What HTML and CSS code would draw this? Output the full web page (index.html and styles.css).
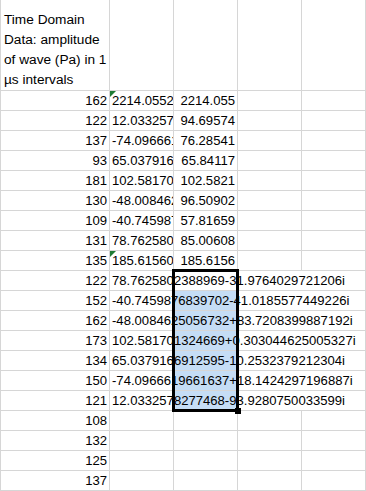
FILE: index.html
```html
<!DOCTYPE html>
<html>
<head>
<meta charset="utf-8">
<link rel="stylesheet" href="styles.css">
</head>
<body>
<div class="sheet">
  <div class="cell a head"><span>Time Domain<br>Data: amplitude<br>of wave (Pa) in 1<br>µs intervals</span></div>
  <div class="cell b"></div><div class="cell c"></div><div class="cell d"></div><div class="cell e"></div>

  <div class="cell a">162</div><div class="cell b flag">2214.05520000001</div><div class="cell c">2214.055</div><div class="cell d"></div><div class="cell e"></div>
  <div class="cell a">122</div><div class="cell b">12.0332578277468</div><div class="cell c">94.69574</div><div class="cell d"></div><div class="cell e"></div>
  <div class="cell a">137</div><div class="cell b">-74.0966619661637</div><div class="cell c">76.28541</div><div class="cell d"></div><div class="cell e"></div>
  <div class="cell a">93</div><div class="cell b">65.0379166912595</div><div class="cell c">65.84117</div><div class="cell d"></div><div class="cell e"></div>
  <div class="cell a">181</div><div class="cell b">102.581701324669</div><div class="cell c">102.5821</div><div class="cell d"></div><div class="cell e"></div>
  <div class="cell a">130</div><div class="cell b">-48.0084625056732</div><div class="cell c">96.50902</div><div class="cell d"></div><div class="cell e"></div>
  <div class="cell a">109</div><div class="cell b">-40.7459876839702</div><div class="cell c">57.81659</div><div class="cell d"></div><div class="cell e"></div>
  <div class="cell a">131</div><div class="cell b">78.7625802388969</div><div class="cell c">85.00608</div><div class="cell d"></div><div class="cell e"></div>
  <div class="cell a">135</div><div class="cell b flag">185.615600000001</div><div class="cell c">185.6156</div><div class="cell d"></div><div class="cell e"></div>

  <div class="cell a">122</div><div class="cell b spill">78.7625802388969-31.9764029721206i</div><div class="cell c active"><div class="selection"><div class="handle"></div></div></div><div class="cell d open"></div><div class="cell e"></div>
  <div class="cell a">152</div><div class="cell b spill">-40.7459876839702-41.0185577449226i</div><div class="cell c sel"></div><div class="cell d open"></div><div class="cell e"></div>
  <div class="cell a">162</div><div class="cell b spill">-48.0084625056732+83.7208399887192i</div><div class="cell c sel"></div><div class="cell d open"></div><div class="cell e"></div>
  <div class="cell a">173</div><div class="cell b spill">102.581701324669+0.303044625005327i</div><div class="cell c sel"></div><div class="cell d open"></div><div class="cell e"></div>
  <div class="cell a">134</div><div class="cell b spill">65.0379166912595-10.2532379212304i</div><div class="cell c sel"></div><div class="cell d open"></div><div class="cell e"></div>
  <div class="cell a">150</div><div class="cell b spill">-74.0966619661637+18.1424297196887i</div><div class="cell c sel"></div><div class="cell d open"></div><div class="cell e"></div>
  <div class="cell a">121</div><div class="cell b spill">12.0332578277468-93.9280750033599i</div><div class="cell c sel"></div><div class="cell d open"></div><div class="cell e"></div>

  <div class="cell a">108</div><div class="cell b"></div><div class="cell c"></div><div class="cell d"></div><div class="cell e"></div>
  <div class="cell a">132</div><div class="cell b"></div><div class="cell c"></div><div class="cell d"></div><div class="cell e"></div>
  <div class="cell a">125</div><div class="cell b"></div><div class="cell c"></div><div class="cell d"></div><div class="cell e"></div>
  <div class="cell a">137</div><div class="cell b"></div><div class="cell c"></div><div class="cell d"></div><div class="cell e"></div>
</div>
</body>
</html>
```

FILE: styles.css
```css
html, body {
  margin: 0;
  padding: 0;
  background: #ffffff;
}

body {
  font-family: "Liberation Sans", Arial, sans-serif;
  font-size: 13.1px;
  color: #000000;
}

.sheet {
  display: grid;
  grid-template-columns: 110px 64px 64px 64px 64px;
  grid-template-rows: 91px repeat(20, 20px);
  width: 366px;
}

.cell {
  box-sizing: border-box;
  border-right: 1px solid #d6d6d6;
  border-bottom: 1px solid #d6d6d6;
  line-height: 19px;
  white-space: nowrap;
  overflow: hidden;
  min-width: 0;
}

.a {
  border-left: 1px solid #d6d6d6;
  text-align: right;
  padding-right: 2px;
}

.head {
  display: flex;
  align-items: flex-end;
  text-align: left;
  padding-left: 3px;
  font-size: 13.66px;
  line-height: 20px;
}

.b {
  position: relative;
  padding-left: 2px;
}

.flag::before {
  content: "";
  position: absolute;
  top: 0;
  left: 0;
  width: 0;
  height: 0;
  border-top: 6px solid #1e7b34;
  border-right: 6px solid transparent;
}

.c {
  text-align: right;
  padding-right: 2px;
}

.spill {
  overflow: visible;
  z-index: 1;
}

.active {
  position: relative;
  overflow: visible;
  background: #ffffff;
}

.sel {
  background: #c5ddf5;
}

.open {
  border-right: none;
}

.selection {
  position: absolute;
  top: -2px;
  left: -2px;
  width: 67px;
  height: 143px;
  z-index: 2;
  box-sizing: border-box;
  border: 3px solid #000000;
  pointer-events: none;
}

.handle {
  position: absolute;
  right: -5px;
  bottom: -5px;
  width: 6px;
  height: 6px;
  background: #000000;
}
```
